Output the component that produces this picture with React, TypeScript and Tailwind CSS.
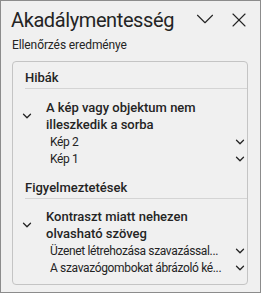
import { ChevronDown, X } from "lucide-react"

type Issue = {
  title: string[]
  items: string[]
}

const sections: { heading: string; issues: Issue[] }[] = [
  {
    heading: "Hibák",
    issues: [
      {
        title: ["A kép vagy objektum nem", "illeszkedik a sorba"],
        items: ["Kép 2", "Kép 1"],
      },
    ],
  },
  {
    heading: "Figyelmeztetések",
    issues: [
      {
        title: ["Kontraszt miatt nehezen", "olvasható szöveg"],
        items: [
          "Üzenet létrehozása szavazással...",
          "A szavazógombokat ábrázoló ké...",
        ],
      },
    ],
  },
]

function IssueGroup({ issue }: { issue: Issue }) {
  return (
    <div className="flex flex-col">
      <div className="flex items-center">
        <div className="w-[21px] shrink-0 flex">
          <ChevronDown size={14} strokeWidth={2.2} className="-ml-[5px]" />
        </div>
        <div className="flex flex-col text-[13px] font-medium leading-[17px]">
          {issue.title.map((line) => (
            <span key={line}>{line}</span>
          ))}
        </div>
      </div>
      <ul className="flex flex-col pl-[25px]" role="list">
        {issue.items.map((item) => (
          <li
            key={item}
            className="flex items-center justify-between h-[17px] text-[12px] tracking-[-0.35px] whitespace-nowrap"
          >
            <span>{item}</span>
            <ChevronDown size={14} strokeWidth={2.2} className="shrink-0" />
          </li>
        ))}
      </ul>
    </div>
  )
}

export default function App() {
  return (
    <div className="w-[261px] h-[293px] bg-[#f0f0f0] border border-[#8c8c8c] text-[#242424] font-['Roboto',sans-serif] flex flex-col">
      <header className="flex items-center pl-[10px] pr-[9px] pt-[5px]">
        <h1 className="text-[20px] leading-[28px] tracking-[-0.4px] flex-1">Akadálymentesség</h1>
        <ChevronDown size={30} strokeWidth={0.9} className="mr-[7px] mt-[-2px]" />
        <X size={24} strokeWidth={1.1} className="mt-[-1px]" />
      </header>
      <p className="pl-[11px] mt-[3px] text-[12px] leading-[16px] tracking-[-0.1px]">
        Ellenőrzés eredménye
      </p>
      <div className="ml-[11px] w-[236px] mt-[8px] border border-[#c4c4c4] rounded-[4px] pl-[12px] pt-[7px] pb-[8px] flex flex-col">
        {sections.map((s, i) => (
          <section key={s.heading} className={i > 0 ? "mt-[12px]" : ""}>
            <h2 className="text-[13px] font-medium leading-[17px] pb-[2px] border-b border-[#d4d4d4]">
              {s.heading}
            </h2>
            <div className={i > 0 ? "pt-[9px]" : "pt-[10px]"}>
              {s.issues.map((issue) => (
                <IssueGroup key={issue.title[0]} issue={issue} />
              ))}
            </div>
          </section>
        ))}
      </div>
    </div>
  )
}
